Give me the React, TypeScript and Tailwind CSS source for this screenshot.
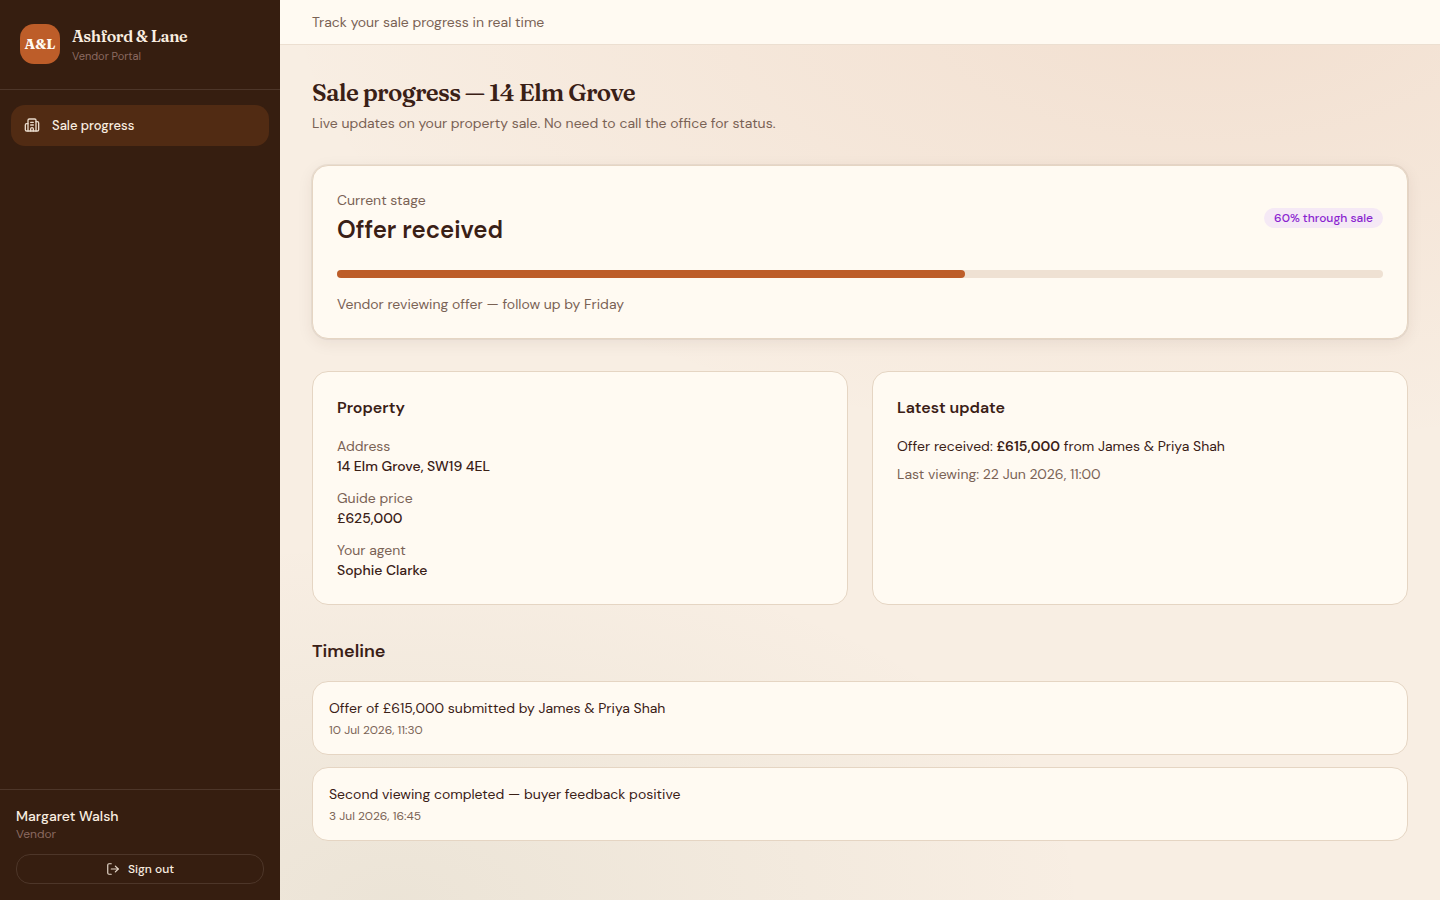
import React from "react";
import { LogOut, Building2 } from "lucide-react";

const muted = "text-[#7a6255]";

function Entry({ title, date }: { title: string; date: string }) {
  return (
    <li className="h-[74px] rounded-2xl border border-[#e5d5c3] bg-[#fffaf2] px-4 py-4">
      <p className="text-sm leading-5">{title}</p>
      <p className={`mt-1 text-xs leading-4 ${muted}`}>{date}</p>
    </li>
  );
}

function Field({ label, value }: { label: string; value: string }) {
  return (
    <div className="text-sm leading-5">
      <dt className={muted}>{label}</dt>
      <dd className="font-medium">{value}</dd>
    </div>
  );
}

export default function App() {
  return (
    <div className="flex h-screen w-full overflow-hidden font-['DM_Sans','Inter',sans-serif] text-[#3a2016]">
      <aside className="flex w-[280px] shrink-0 flex-col bg-[#361e10] text-[#faeee0]">
        <div className="flex h-[90px] items-start gap-3 border-b border-[#4d3629] px-5 pt-6">
          <div className="flex size-10 items-center justify-center rounded-[14px] bg-[#bd5d29] font-['Fraunces','Liberation_Serif',serif] text-sm font-bold text-[#fffaf2]">A&amp;L</div>
          <div>
            <p className="whitespace-nowrap font-['Fraunces','Liberation_Serif',serif] text-base leading-6 font-semibold tracking-tight">Ashford &amp; Lane</p>
            <p className="text-[11px] leading-4 text-[#8b6a60]">Vendor Portal</p>
          </div>
        </div>
        <nav className="flex-1 px-[11px] pt-[15px]">
          <a className="flex h-[41px] items-center gap-3 rounded-[14px] bg-[#512b13] px-[13px] text-[13px] font-medium">
            <Building2 size={16} strokeWidth={2} className="mb-px opacity-90" />
            <span>Sale progress</span>
          </a>
        </nav>
        <div className="h-[111px] border-t border-[#4d3629] px-4 pt-4">
          <p className="text-sm leading-5 font-medium">Margaret Walsh</p>
          <p className="text-xs leading-4 text-[#8b6a60]">Vendor</p>
          <button className="mt-3 flex h-[30px] w-full items-center justify-center gap-2 rounded-[14px] border border-[#4d3629] text-xs font-medium">
            <LogOut size={14} strokeWidth={2} className="opacity-90" />
            <span>Sign out</span>
          </button>
        </div>
      </aside>
      <div className="flex min-w-0 flex-1 flex-col bg-[#f8eee3] bg-[radial-gradient(ellipse_80%_50%_at_80%_0%,rgba(189,93,41,0.10),transparent),radial-gradient(ellipse_60%_40%_at_10%_100%,rgba(90,110,70,0.08),transparent)]">
        <header className={`flex h-[45px] shrink-0 items-center border-b border-[#ecdfd1] bg-[#fffaf2] px-8 text-sm ${muted}`}>
          Track your sale progress in real time
        </header>
        <main className="px-8 pt-8">
          <h1 className="font-['Fraunces','Liberation_Serif',serif] text-2xl leading-8 font-semibold tracking-[-0.0275em]">Sale progress — 14 Elm Grove</h1>
          <p className={`mt-1 text-sm leading-5 ${muted}`}>Live updates on your property sale. No need to call the office for status.</p>
          <section className="mt-8 h-[174px] rounded-2xl border border-[#e5d5c3] bg-[#fffaf2] px-6 pt-6 shadow-[0_0_0_1px_rgba(58,32,22,0.06),0_4px_16px_rgba(58,32,22,0.08)]">
            <div className="flex items-center justify-between">
              <div>
                <p className={`text-sm leading-5 ${muted}`}>Current stage</p>
                <p className="mt-1 text-2xl leading-8 font-semibold">Offer received</p>
              </div>
              <span className="rounded-full bg-[#f5e9f5] px-2.5 py-0.5 text-xs leading-4 font-medium text-[#8a1fd0]">60% through sale</span>
            </div>
            <div className="mt-6 h-2 rounded-full bg-[#efe1d3]">
              <div className="h-2 w-3/5 rounded-full bg-[#bd5d29]" />
            </div>
            <p className={`mt-4 text-sm leading-5 ${muted}`}>Vendor reviewing offer — follow up by Friday</p>
          </section>
          <div className="mt-8 grid grid-cols-2 gap-6">
            <section className="h-[234px] rounded-2xl border border-[#e5d5c3] bg-[#fffaf2] px-6 pt-6">
              <h2 className="text-base leading-6 font-semibold">Property</h2>
              <dl className="mt-4 flex flex-col gap-3">
                <Field label="Address" value="14 Elm Grove, SW19 4EL" />
                <Field label="Guide price" value="£625,000" />
                <Field label="Your agent" value="Sophie Clarke" />
              </dl>
            </section>
            <section className="h-[234px] rounded-2xl border border-[#e5d5c3] bg-[#fffaf2] px-6 pt-6">
              <h2 className="text-base leading-6 font-semibold">Latest update</h2>
              <p className="mt-4 text-sm leading-5">Offer received: <strong className="font-semibold">£615,000</strong> from James &amp; Priya Shah</p>
              <p className={`mt-2 text-sm leading-5 ${muted}`}>Last viewing: 22 Jun 2026, 11:00</p>
            </section>
          </div>
          <h2 className="mt-8 text-lg leading-7 font-semibold">Timeline</h2>
          <ul className="mt-4 flex flex-col gap-3">
            <Entry title="Offer of £615,000 submitted by James & Priya Shah" date="10 Jul 2026, 11:30" />
            <Entry title="Second viewing completed — buyer feedback positive" date="3 Jul 2026, 16:45" />
          </ul>
        </main>
      </div>
    </div>
  );
}
